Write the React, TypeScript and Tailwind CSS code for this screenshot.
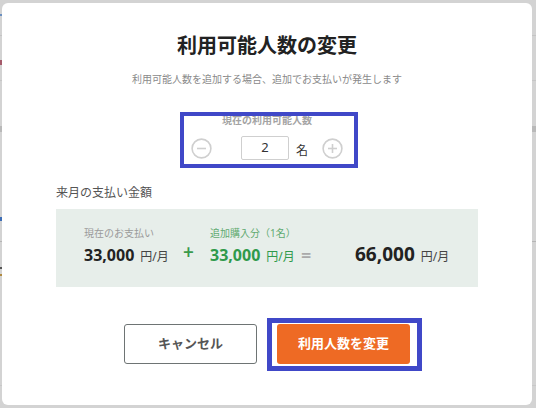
import React from 'react';

const font = { fontFamily: '"Noto Sans", "Noto Sans CJK JP", sans-serif' };

function CircleButton({ sign }: { sign: '-' | '+' }) {
  return (
    <button className="w-[21px] h-[21px] flex items-center justify-center text-[#cfcfcf]">
      <svg width="21" height="21" viewBox="0 0 21 21" fill="none" stroke="currentColor" strokeWidth="1.6">
        <circle cx="10.5" cy="10.5" r="9.4" />
        <path d="M6 10.5h9" />
        {sign === '+' && <path d="M10.5 6v9" />}
      </svg>
    </button>
  );
}

export default function App() {
  return (
    <div className="relative w-[536px] h-[408px] overflow-hidden bg-[#d3d3d3]" style={font}>
      {/* page behind the overlay */}
      <div className="absolute inset-0">
        <div className="absolute left-0 right-0 top-[35px] h-px bg-[#c4c4c4]" />
        <div className="absolute left-0 right-0 top-[80px] h-px bg-[#c6c6c6]" />
        <div className="absolute left-0 right-0 top-[126px] h-[6px] bg-[#b9b9b9]" />
        <div className="absolute left-0 right-0 top-[241px] h-px bg-[#b5b5b5]" />
        <div className="absolute left-0 right-0 top-[385px] h-px bg-[#c8c8c8]" />
        <div className="absolute left-0 top-[14px] w-[2px] h-[2px] bg-[#6a8fc0]" />
        <div className="absolute left-0 top-[60px] w-[2px] h-[5px] bg-[#a45a6a]" />
        <div className="absolute left-0 top-[217px] w-[2px] h-[4px] bg-[#3d6db5]" />
        <div className="absolute left-0 top-[267px] w-[2px] h-[2px] bg-[#555]" />
        <div className="absolute left-0 top-[274px] w-[2px] h-[2px] bg-[#b08a40]" />
      </div>

      <div className="relative flex h-full pt-[3px] pl-[2px] pr-[4px] pb-[3px]">
        <div className="flex-1 bg-white rounded-[6px] flex flex-col items-center pt-[29px]">
          <h1 className="text-[20px] leading-[28px] font-bold text-[#222]">利用可能人数の変更</h1>
          <p className="mt-[11px] text-[10px] leading-[16px] text-[#8a8a8a]">
            利用可能人数を追加する場合、追加でお支払いが発生します
          </p>

          <div className="relative mt-[26px] flex flex-col items-center">
            <div className="text-[10px] leading-[14px] font-bold text-[#a3a3a3]">現在の利用可能人数</div>
            <div className="mt-[9px] flex items-center">
              <CircleButton sign="-" />
              <div className="ml-[29px] w-[48px] h-[24px] border border-[#cfcfcf] rounded-[2px] flex items-center justify-center text-[13px] text-[#333]">
                2
              </div>
              <span className="ml-[7px] mt-[6px] text-[12px] text-[#333]">名</span>
              <div className="ml-[14px]">
                <CircleButton sign="+" />
              </div>
            </div>
          </div>

          <div className="self-stretch px-[54px] mt-[24px]">
            <div className="text-[12px] leading-[18px] text-[#555]">来月の支払い金額</div>
            <div className="mt-[7px] h-[78px] bg-[#e7eeea] pl-[28px] pt-[17px]">
              <div className="flex items-end">
                <div className="w-[99px]">
                  <div className="text-[10px] leading-[14px] text-[#9a9a9a]">現在のお支払い</div>
                  <div className="mt-[4px] flex items-baseline text-[#222]">
                    <span className="text-[16px] leading-[22px] font-bold">33,000</span>
                    <span className="ml-[6px] text-[12px] text-[#444]">円/月</span>
                  </div>
                </div>
                <div className="w-[27px] pb-[1px] text-[19px] leading-[26px] font-semibold text-[#3a9a4c]">+</div>
                <div className="w-[91px]">
                  <div className="text-[10px] leading-[14px] text-[#5faa70]">追加購入分（1名）</div>
                  <div className="mt-[4px] flex items-baseline text-[#2f9a4b]">
                    <span className="text-[16px] leading-[22px] font-bold">33,000</span>
                    <span className="ml-[6px] text-[12px]">円/月</span>
                  </div>
                </div>
                <div className="w-[54px] text-[18px] leading-[22px] font-semibold text-[#aaa]">=</div>
                <div className="flex items-baseline text-[#222]">
                  <span className="text-[19px] leading-[24px] font-bold">66,000</span>
                  <span className="ml-[6px] text-[12px] text-[#444]">円/月</span>
                </div>
              </div>
            </div>
          </div>

          <div className="mt-[37px] flex gap-[20px]">
            <button className="w-[133px] h-[40px] border border-[#6e7474] rounded-[3px] text-[13px] font-bold text-[#555]">
              キャンセル
            </button>
            <button className="w-[133px] h-[40px] rounded-[3px] bg-[#ee6a24] text-[13px] font-bold text-white">
              利用人数を変更
            </button>
          </div>
        </div>
      </div>

      {/* annotation frames */}
      <div className="absolute left-[180px] top-[112px] w-[178px] h-[56px] border-[4px] border-[#4048c8]" />
      <div className="absolute left-[267px] top-[318px] w-[155px] h-[53px] border-[5px] border-[#4048c8]" />
    </div>
  );
}
